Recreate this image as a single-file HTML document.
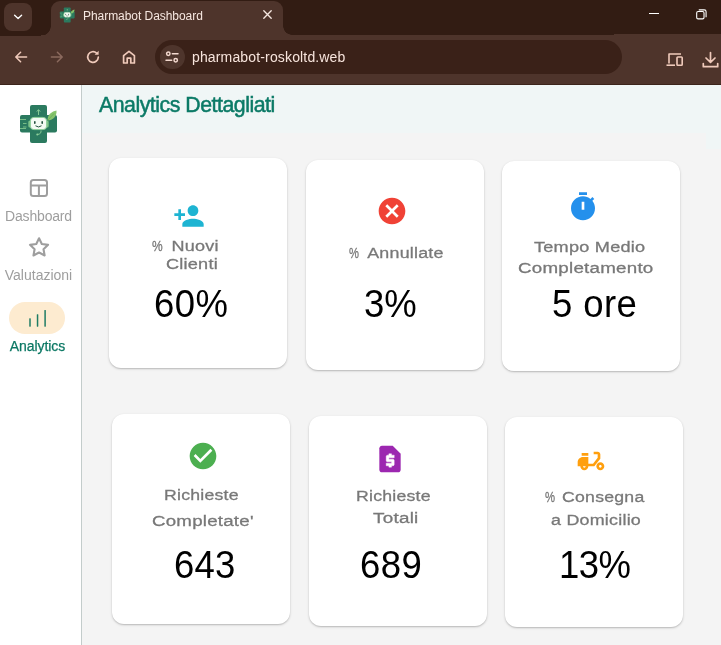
<!DOCTYPE html>
<html lang="it">
<head>
<meta charset="utf-8">
<title>Pharmabot Dashboard</title>
<style>
*{box-sizing:border-box;margin:0;padding:0}
html,body{width:721px;height:645px;overflow:hidden}
body{position:relative;background:#f4f4f4;font-family:"Liberation Sans",sans-serif;}
.abs{position:absolute}
.lbl,.num,.nav,#title,#url,#tabtitle{will-change:transform}
/* browser chrome */
#tabstrip{left:0;top:0;width:721px;height:35px;background:#321c13}
#toolbar{left:0;top:35px;width:721px;height:50px;background:#4e342b;border-bottom:1px solid #3c241b}
#tabsearch{left:4px;top:3px;width:28px;height:28px;border-radius:8px;background:#4e342b}
#tab{left:51px;top:1px;width:232px;height:34px;background:#4e342b;border-radius:9px 9px 0 0}
#tab:before,#tab:after{content:"";position:absolute;bottom:0;width:9px;height:9px;background:radial-gradient(circle at 0 0,rgba(0,0,0,0) 8.5px,#4e342b 9px)}
#tab:before{left:-10px;bottom:-1px;width:10px;height:10px;background:radial-gradient(circle at 0 0,rgba(0,0,0,0) 9.5px,#4e342b 10px)}
#tab:after{right:-9px;background:radial-gradient(circle at 100% 0,rgba(0,0,0,0) 8.5px,#4e342b 9px)}
#tabtitle{left:83px;top:9px;font-size:12px;line-height:15px;color:#f6e7e0;white-space:nowrap;letter-spacing:-0.050px}
#omni{left:155px;top:40px;width:467px;height:34px;border-radius:17px;background:#3a2118}
#siteinfo{left:160px;top:44.700px;width:24.600px;height:24.600px;border-radius:12.300px;background:#4e352c}
#url{left:192px;top:47.500px;font-size:14px;line-height:18px;color:#f7e4dc;white-space:nowrap;letter-spacing:0.150px}
/* page */
#sidebar{left:0;top:85px;width:81px;height:560px;background:#fff}
#sideline{left:81px;top:85px;width:1px;height:560px;background:#c3cccb}
#header{left:82px;top:85px;width:639px;height:48px;background:#f0f6f6}
#title{left:98.500px;top:93.200px;font-size:21.300px;line-height:24px;color:#0b7a66;white-space:nowrap;letter-spacing:-0.480px;-webkit-text-stroke:0.500px #0b7a66}
.nav{font-size:14px;line-height:16px;color:#9e9e9e;white-space:nowrap;text-align:center;width:81px;left:0}
#pill{left:9.300px;top:302px;width:55.800px;height:32px;border-radius:16px;background:#fdebd0}
.card{width:178px;height:209.500px;background:#fff;border-radius:12px;box-shadow:0 1px 2.500px rgba(0,0,0,.19),0 1px 1px rgba(0,0,0,.08)}
.lbl{font-family:"Liberation Sans",sans-serif;font-size:15.500px;line-height:20px;color:#787878;white-space:pre;transform-origin:0 0;letter-spacing:0.200px;-webkit-text-stroke:0.300px #787878}
.pc{display:inline-block;transform-origin:0 50%}
.num{font-size:36.5px;line-height:40px;color:#000;white-space:nowrap;transform:scaleY(1.045);transform-origin:0 33px}
</style>
</head>
<body>
<!-- ===== Browser chrome ===== -->
<div id="tabstrip" class="abs"></div>
<div id="toolbar" class="abs"></div>
<div class="abs" style="left:0;top:35px;width:41px;height:1px;background:#321c13"></div>
<div class="abs" style="left:614px;top:34px;width:107px;height:1px;background:#4e342b"></div>
<div id="tabsearch" class="abs"></div>
<svg class="abs" style="left:12px;top:12px" width="12" height="10" viewBox="0 0 12 10"><path d="M2.600 3.200 L6.100 6.600 L9.600 3.200" fill="none" stroke="#fff" stroke-width="1.350" stroke-linecap="round" stroke-linejoin="round"/></svg>
<div id="tab" class="abs"></div>
<!-- favicon -->
<svg class="abs" style="left:58.500px;top:6.800px" width="16.500" height="16" viewBox="0 0 39 40">
  <rect x="11" y="1" width="17" height="38" rx="2" fill="#2b7a5f"/>
  <rect x="1" y="11" width="37" height="17.500" rx="2" fill="#2b7a5f"/>
  <path d="M1 15.500 H7 M4 19.500 H7.500 M4 23 H7.500 M1 24.500 H7" stroke="#7fc48a" stroke-width="0.900" fill="none"/>
  <path d="M19.500 6 V11 M17.800 7.600 L19.500 5.600 L21.200 7.600" stroke="#8fd09a" stroke-width="0.900" fill="none"/>
  <rect x="9.300" y="16.500" width="3" height="7" rx="1.500" fill="#7fc48a"/>
  <rect x="26.700" y="16.500" width="3" height="7" rx="1.500" fill="#7fc48a"/>
  <rect x="11.400" y="13.400" width="16.200" height="12.200" rx="3.500" fill="#f4faf3" stroke="#8fd09a" stroke-width="1"/>
  <rect x="15" y="17" width="1.600" height="3" rx="0.800" fill="#24523f"/>
  <rect x="22.400" y="17" width="1.600" height="3" rx="0.800" fill="#24523f"/>
  <path d="M16.800 22 Q19.500 24.200 22.200 22" stroke="#24523f" stroke-width="1" fill="none" stroke-linecap="round"/>
  <path d="M22 26.500 Q22.500 30 18.500 30.500" stroke="#8fd09a" stroke-width="0.900" fill="none"/>
  <circle cx="18.300" cy="30.600" r="1" fill="#8fd09a"/>
  <path d="M28.500 16.500 C28.500 10 33 7.500 37.500 6.500 C38 11 35 16.500 28.500 16.500z" fill="#86c46b"/>
  <path d="M29 16 L35 9.500" stroke="#5fa456" stroke-width="0.600"/>
</svg>
<div id="tabtitle" class="abs">Pharmabot Dashboard</div>
<svg class="abs" style="left:261.500px;top:9.300px" width="11" height="11" viewBox="0 0 11 11"><path d="M1.800 1.800 L9.200 9.200 M9.200 1.800 L1.800 9.200" stroke="#f6e7e0" stroke-width="1.350" stroke-linecap="round"/></svg>
<!-- window controls -->
<div class="abs" style="left:649px;top:13px;width:10px;height:1px;background:#fff"></div>
<svg class="abs" style="left:695.500px;top:8.700px" width="11" height="11" viewBox="0 0 12 12"><rect x="0.75" y="2.75" width="8" height="8" rx="1.5" fill="none" stroke="#fff" stroke-width="1.2"/><path d="M3 1 H9 Q11 1 11 3 V9" fill="none" stroke="#fff" stroke-width="1.2"/></svg>
<!-- toolbar icons -->
<svg class="abs" style="left:13px;top:49px" width="16" height="16" viewBox="0 0 16 16"><path d="M13.600 8 H3.200 M7.600 3.200 L2.800 8 L7.600 12.800" fill="none" stroke="#f0cabb" stroke-width="1.500" stroke-linecap="round" stroke-linejoin="round"/></svg>
<svg class="abs" style="left:49px;top:49px" width="16" height="16" viewBox="0 0 16 16"><path d="M2.400 8 H12.800 M8.400 3.200 L13.200 8 L8.400 12.800" fill="none" stroke="#8b6a5e" stroke-width="1.500" stroke-linecap="round" stroke-linejoin="round"/></svg>
<svg class="abs" style="left:85px;top:49px" width="16" height="16" viewBox="0 0 16 16"><path d="M13.300 8.200 A5.300 5.300 0 1 1 11.600 4.100" fill="none" stroke="#f0cabb" stroke-width="1.700" stroke-linecap="round"/><path d="M13.600 1.800 V5.800 H9.600z" fill="#f0cabb"/></svg>
<svg class="abs" style="left:121px;top:49px" width="16" height="16" viewBox="0 0 16 16"><path d="M2.600 14 V6.600 L8 2.300 L13.400 6.600 V14 H9.800 V9.200 H6.200 V14z" fill="none" stroke="#f0cabb" stroke-width="1.700" stroke-linejoin="round"/></svg>
<div id="omni" class="abs"></div>
<div id="siteinfo" class="abs"></div>
<svg class="abs" style="left:164px;top:49px" width="16" height="16" viewBox="0 0 16 16"><g fill="none" stroke="#f3d9cf" stroke-width="1.500" stroke-linecap="round"><circle cx="4.300" cy="4.800" r="1.700"/><path d="M8.300 4.800 H14"/><circle cx="11.700" cy="11.200" r="1.700"/><path d="M2 11.200 H7.700"/></g></svg>
<div id="url" class="abs">pharmabot-roskoltd.web</div>
<svg class="abs" style="left:665px;top:51px" width="19" height="17" viewBox="0 0 19 17"><g fill="none" stroke="#f0cabb" stroke-width="1.600" stroke-linejoin="round"><path d="M4 12.500 V3 H16"/><path d="M1.500 14.200 H10"/><rect x="12" y="6" width="5.200" height="8.200" rx="0.800"/></g></svg>
<svg class="abs" style="left:701px;top:51px" width="19" height="18" viewBox="0 0 19 18"><g fill="none" stroke="#f0cabb" stroke-width="1.700" stroke-linecap="round" stroke-linejoin="round"><path d="M9.500 1.500 V11 M5 7 L9.500 11.300 L14 7"/><path d="M2.300 12.500 V15.700 H16.700 V12.500"/></g></svg>

<!-- ===== Page ===== -->
<div id="sidebar" class="abs"></div>
<div id="sideline" class="abs"></div>
<div id="header" class="abs"></div>
<div class="abs" style="left:706px;top:133px;width:15px;height:16px;background:#f0f6f6"></div>
<div id="title" class="abs">Analytics Dettagliati</div>

<!-- logo -->
<svg class="abs" style="left:19px;top:104px" width="39" height="40" viewBox="0 0 39 40">
  <rect x="11" y="1" width="17" height="38" rx="2" fill="#2b7a5f"/>
  <rect x="1" y="11" width="37" height="17.500" rx="2" fill="#2b7a5f"/>
  <path d="M1 15.500 H7 M4 19.500 H7.500 M4 23 H7.500 M1 24.500 H7" stroke="#7fc48a" stroke-width="0.900" fill="none"/>
  <path d="M19.500 6 V11 M17.800 7.600 L19.500 5.600 L21.200 7.600" stroke="#8fd09a" stroke-width="0.900" fill="none"/>
  <rect x="9.300" y="16.500" width="3" height="7" rx="1.500" fill="#7fc48a"/>
  <rect x="26.700" y="16.500" width="3" height="7" rx="1.500" fill="#7fc48a"/>
  <rect x="11.400" y="13.400" width="16.200" height="12.200" rx="3.500" fill="#f4faf3" stroke="#8fd09a" stroke-width="1"/>
  <rect x="15" y="17" width="1.600" height="3" rx="0.800" fill="#24523f"/>
  <rect x="22.400" y="17" width="1.600" height="3" rx="0.800" fill="#24523f"/>
  <path d="M16.800 22 Q19.500 24.200 22.200 22" stroke="#24523f" stroke-width="1" fill="none" stroke-linecap="round"/>
  <path d="M22 26.500 Q22.500 30 18.500 30.500" stroke="#8fd09a" stroke-width="0.900" fill="none"/>
  <circle cx="18.300" cy="30.600" r="1" fill="#8fd09a"/>
  <path d="M28.500 16.500 C28.500 10 33 7.500 37.500 6.500 C38 11 35 16.500 28.500 16.500z" fill="#86c46b"/>
  <path d="M29 16 L35 9.500" stroke="#5fa456" stroke-width="0.600"/>
</svg>

<!-- nav: Dashboard -->
<svg class="abs" style="left:29px;top:178px" width="20" height="20" viewBox="0 0 20 20"><g fill="none" stroke="#9e9e9e" stroke-width="2"><rect x="1.800" y="2" width="16.200" height="16" rx="2.500"/><path d="M1.800 7.500 H18 M9.900 7.500 V18"/></g></svg>
<div class="abs nav" style="top:207.800px;left:-1.700px;letter-spacing:-0.180px">Dashboard</div>
<!-- nav: Valutazioni -->
<svg class="abs" style="left:26.900px;top:234.800px" width="24" height="24" viewBox="0 0 24 24"><path fill="none" stroke="#9e9e9e" stroke-width="2.100" stroke-linejoin="round" d="M12.05 3.30 L14.81 9.00 L21.09 9.86 L16.52 14.25 L17.63 20.49 L12.05 17.50 L6.47 20.49 L7.58 14.25 L3.01 9.86 L9.29 9.00Z"/></svg>
<div class="abs nav" style="top:266.500px;left:-2.500px">Valutazioni</div>
<!-- nav: Analytics -->
<div id="pill" class="abs"></div>
<svg class="abs" style="left:25px;top:306px" width="24" height="24" viewBox="0 0 24 24"><g fill="#1f7c64"><rect x="4.250" y="12.300" width="1.500" height="8.400" rx="0.400"/><rect x="11.800" y="8.200" width="1.500" height="12.500" rx="0.400"/><rect x="19.350" y="3.900" width="1.500" height="16.800" rx="0.400"/></g></svg>
<div class="abs nav" style="top:337.700px;left:-2.800px;color:#0c7864;letter-spacing:-0.080px;-webkit-text-stroke:0.250px #0c7864">Analytics</div>

<!-- ===== Cards ===== -->
<div class="abs card" style="left:109px;top:158px"></div>
<div class="abs card" style="left:306px;top:160px"></div>
<div class="abs card" style="left:502px;top:161px"></div>
<div class="abs card" style="left:112px;top:414px"></div>
<div class="abs card" style="left:309px;top:416px"></div>
<div class="abs card" style="left:505px;top:417px"></div>

<!-- card 1 -->
<svg class="abs" style="left:172.800px;top:199.700px" width="32" height="32" viewBox="0 0 24 24"><path fill="#1eb4d2" d="M15 12c2.210 0 4-1.790 4-4s-1.790-4-4-4-4 1.790-4 4 1.790 4 4 4zm-9-2V7H4v3H1v2h3v3h2v-3h3v-2H6zm9 4c-2.670 0-8 1.340-8 4v2h16v-2c0-2.660-5.330-4-8-4z"/></svg>
<div class="abs lbl" id="l1a" style="left:152.3px;top:235.9px;transform:scaleX(1.163)"><span class="pc" style="transform:scaleX(0.666);margin-right:-6.16px">%</span>  Nuovi</div>
<div class="abs lbl" id="l1b" style="left:166.4px;top:254.3px;transform:scaleX(1.168)">Clienti</div>
<div class="abs num" id="n1" style="left:153.5px;top:285.2px;letter-spacing:0.5px">60%</div>

<!-- card 2 -->
<svg class="abs" style="left:376px;top:195px" width="32" height="32" viewBox="0 0 24 24"><path fill="#f04236" d="M12 2C6.470 2 2 6.470 2 12s4.470 10 10 10 10-4.470 10-10S17.530 2 12 2zm5 13.590L15.590 17 12 13.410 8.410 17 7 15.590 10.590 12 7 8.410 8.410 7 12 10.590 15.590 7 17 8.410 13.410 12 17 15.590z"/></svg>
<div class="abs lbl" id="l2a" style="left:349px;top:243.4px;transform:scaleX(1.151)"><span class="pc" style="transform:scaleX(0.627);margin-right:-1.83px">%</span> Annullate</div>
<div class="abs num" id="n2" style="left:364px;top:284.6px;letter-spacing:0px">3%</div>

<!-- card 3 -->
<svg class="abs" style="left:567px;top:190.700px" width="32" height="32" viewBox="0 0 24 24"><path fill="#2490ec" d="M9 1h6v2H9zm10.030 6.390 1.420-1.420c-.43-.51-.9-.99-1.410-1.410l-1.420 1.420C16.070 4.740 14.120 4 12 4c-4.970 0-9 4.030-9 9s4.020 9 9 9 9-4.030 9-9c0-2.120-.74-4.070-1.970-5.610zM13 14h-2V8h2v6z"/></svg>
<div class="abs lbl" id="l3a" style="left:534px;top:236.8px;transform:scaleX(1.17)">Tempo Medio</div>
<div class="abs lbl" id="l3b" style="left:518px;top:258.4px;transform:scaleX(1.21)">Completamento</div>
<div class="abs num" id="n3" style="left:552px;top:284.8px;letter-spacing:0.42px">5 ore</div>

<!-- card 4 -->
<svg class="abs" style="left:186.500px;top:440px" width="32" height="32" viewBox="0 0 24 24"><path fill="#4caf50" d="M12 2C6.480 2 2 6.480 2 12s4.480 10 10 10 10-4.480 10-10S17.520 2 12 2zm-2 15l-5-5 1.410-1.410L10 14.170l7.590-7.590L19 8l-9 9z"/></svg>
<div class="abs lbl" id="l4a" style="left:164px;top:484.9px;transform:scaleX(1.141)">Richieste</div>
<div class="abs lbl" id="l4b" style="left:151.5px;top:510.6px;transform:scaleX(1.205)">Completate'</div>
<div class="abs num" id="n4" style="left:174px;top:546.4px;letter-spacing:0.2px">643</div>

<!-- card 5 -->
<svg class="abs" style="left:374px;top:443.200px" width="32" height="32" viewBox="0 0 24 24"><path fill="#9c27b0" d="M14 2H6c-1.100 0-2 .9-2 2v16c0 1.100.9 2 2 2h12c1.100 0 2-.9 2-2V8l-6-6z"/><path fill="#fff" stroke="#fff" stroke-width="0.300" transform="translate(0.150 -0.900)" d="M15 12h-4v1h3c.550 0 1 .450 1 1v3c0 .550-.450 1-1 1h-1v1h-2v-1H9v-2h4v-1h-3c-.550 0-1-.450-1-1v-3c0-.550.450-1 1-1h1V9h2v1h2v2z"/></svg>
<div class="abs lbl" id="l5a" style="left:356px;top:486.4px;transform:scaleX(1.141)">Richieste</div>
<div class="abs lbl" id="l5b" style="left:373px;top:508.2px;transform:scaleX(1.217)">Totali</div>
<div class="abs num" id="n5" style="left:360.2px;top:546.4px;letter-spacing:0.4px">689</div>

<!-- card 6 -->
<svg class="abs" style="left:575.400px;top:445px" width="32" height="32" viewBox="0 0 24 24"><path fill="#ff9f0e" d="M19 7c0-1.100-.9-2-2-2h-3v2h3v2.650L13.520 14H10V9H6c-2.210 0-4 1.790-4 4v3h2c0 1.660 1.340 3 3 3s3-1.340 3-3h4.480L19 10.350V7zM7 17c-.55 0-1-.45-1-1h2c0 .55-.45 1-1 1z"/><path fill="#ff9f0e" d="M5 6h5v2H5zm14 7c-1.660 0-3 1.340-3 3s1.340 3 3 3 3-1.340 3-3-1.340-3-3-3zm0 4c-.55 0-1-.45-1-1s.45-1 1-1 1 .45 1 1-.45 1-1 1z"/></svg>
<div class="abs lbl" id="l6a" style="left:544.6px;top:486.9px;transform:scaleX(1.14)"><span class="pc" style="transform:scaleX(0.639);margin-right:-3.53px">%</span> Consegna</div>
<div class="abs lbl" id="l6b" style="left:550.9px;top:509.5px;transform:scaleX(1.154)">a Domicilio</div>
<div class="abs num" id="n6" style="left:559.4px;top:546.2px;letter-spacing:-0.6px">13%</div>

</body>
</html>
